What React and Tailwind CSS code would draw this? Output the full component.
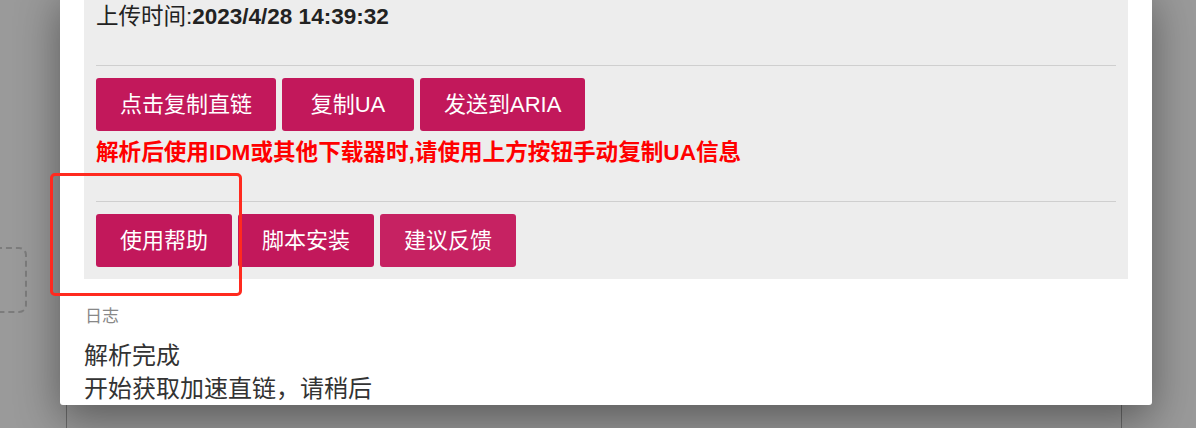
import React from "react";

const FONT = { fontFamily: '"Liberation Sans", "Noto Sans CJK SC", Arial, sans-serif' };

function Btn({ children, light }) {
  return (
    <button
      className={
        "h-[53px] min-w-[132px] px-6 rounded-[3px] text-[22px] leading-none text-white " +
        (light ? "bg-[#c62262]" : "bg-[#c2185b]")
      }
      style={FONT}
    >
      {children}
    </button>
  );
}

export default function App() {
  return (
    <div className="relative w-[1196px] h-[428px] overflow-hidden bg-[#9a9a9a]" style={FONT}>
      {/* underlying page (dimmed by overlay) */}
      <div className="absolute inset-0 flex">
        <div className="ml-[66px] w-[1056px] h-full border-x border-[#6a6a6a]" />
      </div>
      <div className="absolute left-[-12px] top-[247px] w-[39px] h-[66px] border-2 border-dashed border-[#7c7c7c] rounded-[8px]" />

      {/* modal */}
      <div className="absolute left-[60px] top-[-12px] w-[1092px] h-[417px] bg-white px-6 shadow-[0_14px_44px_rgba(0,0,0,0.42)] rounded-b-[3px]">
        <div className="bg-[#ededed] px-3 pt-[14px] pb-3">
          <div className="text-[22.5px] leading-[30px] text-[#222]">
            上传时间:<span className="font-bold">2023/4/28 14:39:32</span>
          </div>
          <div className="mt-[33px] h-px bg-[#cfcfcf]" />
          <div className="mt-3 flex gap-[6px]">
            <Btn>点击复制直链</Btn>
            <Btn>复制UA</Btn>
            <Btn>发送到ARIA</Btn>
          </div>
          <div className="mt-[7px] text-[22.6px] leading-[30px] font-bold text-[#ff0000]">
            解析后使用IDM或其他下载器时,请使用上方按钮手动复制UA信息
          </div>
          <div className="mt-[33px] h-px bg-[#cfcfcf]" />
          <div className="mt-3 flex gap-[6px]">
            <Btn>使用帮助</Btn>
            <Btn>脚本安装</Btn>
            <Btn light>建议反馈</Btn>
          </div>
        </div>
        <div className="mt-[25px] pl-px text-[17px] leading-[25px] text-[#888]">日志</div>
        <div className="mt-[10px] text-[24px] leading-[33px] text-[#333]">
          <div>解析完成</div>
          <div>开始获取加速直链，请稍后</div>
        </div>
      </div>

      {/* annotation */}
      <div className="absolute left-[50px] top-[173px] w-[192px] h-[123px] border-[3px] border-[#ff2a1f] rounded-[5px]" />
    </div>
  );
}
